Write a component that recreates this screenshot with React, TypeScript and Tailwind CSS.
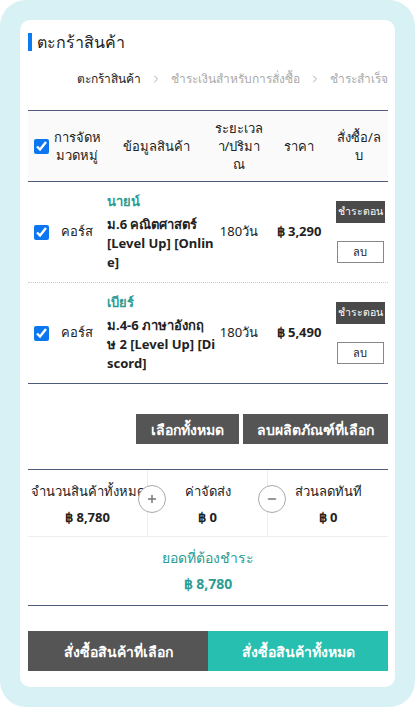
import { Plus, Minus, ChevronRight } from 'lucide-react';

interface CartItem {
    teacher: string;
    lines: string[];
    duration: string;
    price: string;
}

const items: CartItem[] = [
    {
        teacher: 'นายน์',
        lines: ['ม.6 คณิตศาสตร์', '[Level Up] [Onlin', 'e]'],
        duration: '180วัน',
        price: '3,290',
    },
    {
        teacher: 'เบียร์',
        lines: ['ม.4-6 ภาษาอังกฤ', 'ษ 2 [Level Up] [Di', 'scord]'],
        duration: '180วัน',
        price: '5,490',
    },
];

const Check = () => (
    <input
        type="checkbox"
        defaultChecked
        className="w-[15px] h-[15px] m-0 accent-[#0b76ef]"
    />
);

export default function App() {
    return (
        <div className="bg-white min-h-screen font-['Noto_Sans',sans-serif] text-[#222]">
            <div className="bg-[#d8f1f5] rounded-[26px] p-5 h-[707px]">
                <div className="bg-white rounded-[10px] h-full pl-2 pr-[7px] pt-[13px] flex flex-col">
                    {/* title */}
                    <div className="flex items-center gap-[5px] h-[18px]">
                        <div className="w-1 h-[18px] bg-[#0a7cf3]" />
                        <h1 className="text-[16px] leading-none">ตะกร้าสินค้า</h1>
                    </div>

                    {/* steps */}
                    <div className="flex justify-end items-center gap-[9px] whitespace-nowrap overflow-hidden text-[12px] mt-[19px] h-[18px]">
                        <span className="text-[#222]">ตะกร้าสินค้า</span>
                        <ChevronRight className="w-3 h-3 text-[#aaa]" />
                        <span className="text-[#aaa]">ชำระเงินสำหรับการสั่งซื้อ</span>
                        <ChevronRight className="w-3 h-3 text-[#aaa]" />
                        <span className="text-[#aaa]">ชำระสำเร็จ</span>
                    </div>

                    {/* table */}
                    <div className="mt-[22px] border-t border-[#4d5b78] text-[13px]">
                        <div className="flex items-center h-[71px] bg-[#fafafa] border-b border-[#4d5b78] text-center leading-[18px]">
                            <div className="w-[24px] flex justify-center pl-[3px]"><Check /></div>
                            <div className="w-[50px]">การจัดห<br />มวดหมู่</div>
                            <div className="w-[108px]">ข้อมูลสินค้า</div>
                            <div className="w-[58px]">ระยะเวล<br />า/ปริมา<br />ณ</div>
                            <div className="w-[62px]">ราคา</div>
                            <div className="w-[58px] whitespace-nowrap">สั่งซื้อ/ล<br />บ</div>
                        </div>
                        {items.map((it, i) => (
                            <div
                                key={it.teacher}
                                className={
                                    i === 0
                                        ? 'flex items-center h-[101px] border-b border-dotted border-[#ccc]'
                                        : 'flex items-center h-[101px] border-b border-[#4d5b78]'
                                }
                            >
                                <div className="w-[24px] flex justify-center pl-[3px]"><Check /></div>
                                <div className="w-[50px] text-center">คอร์ส</div>
                                <div className="w-[108px] pl-[5px]">
                                    <div className="text-[#2a9d93] font-semibold leading-[18px] mb-[5px]">{it.teacher}</div>
                                    {it.lines.map((l) => (
                                        <div key={l} className="font-bold leading-[19px] whitespace-nowrap">{l}</div>
                                    ))}
                                </div>
                                <div className="w-[58px] text-center">{it.duration}</div>
                                <div className="w-[62px] text-center font-bold">฿ {it.price}</div>
                                <div className="w-[58px] flex flex-col items-center gap-[18px] pl-[2px]">
                                    <button className="bg-[#4a4a4a] text-white text-[10.5px] px-0 h-[22px] w-[49px] whitespace-nowrap">ชำระตอน</button>
                                    <button className="border border-[#888] text-[11px] h-[22px] w-[47px]">ลบ</button>
                                </div>
                            </div>
                        ))}
                    </div>

                    {/* bulk actions */}
                    <div className="flex justify-end gap-1 mt-[30px]">
                        <button className="bg-[#555] text-white text-[14px] font-semibold h-[30px] px-[15px]">เลือกทั้งหมด</button>
                        <button className="bg-[#555] text-white text-[14px] font-semibold h-[30px] px-[14px]">ลบผลิตภัณฑ์ที่เลือก</button>
                    </div>

                    {/* summary */}
                    <div className="mt-[25px] border-t border-[#4d5b78]">
                        <div className="relative grid grid-cols-3 h-[67px] border-b border-[#eee] text-[13px]">
                            <div className="flex flex-col items-center pt-[12px] gap-[6px] border-r border-[#eee] overflow-hidden whitespace-nowrap">
                                <span>จำนวนสินค้าทั้งหมด</span>
                                <span className="font-bold">฿ 8,780</span>
                            </div>
                            <div className="flex flex-col items-center pt-[12px] gap-[6px] border-r border-[#eee]">
                                <span>ค่าจัดส่ง</span>
                                <span className="font-bold">฿ 0</span>
                            </div>
                            <div className="flex flex-col items-center pt-[12px] gap-[6px]">
                                <span>ส่วนลดทันที</span>
                                <span className="font-bold">฿ 0</span>
                            </div>
                            <div className="absolute left-[110px] top-[15px] w-[28px] h-[28px] rounded-full border border-[#aaa] bg-white flex items-center justify-center">
                                <Plus className="w-3 h-3 text-[#777]" strokeWidth={3} />
                            </div>
                            <div className="absolute left-[230px] top-[15px] w-[28px] h-[28px] rounded-full border border-[#aaa] bg-white flex items-center justify-center">
                                <Minus className="w-3 h-3 text-[#777]" strokeWidth={3} />
                            </div>
                        </div>
                        <div className="h-[69px] flex flex-col items-center pt-[10px] gap-[5px] text-[#2a9d93] text-[14px] border-b border-[#4d5b78]">
                            <span>ยอดที่ต้องชำระ</span>
                            <span className="font-bold">฿ 8,780</span>
                        </div>
                    </div>

                    {/* checkout */}
                    <div className="grid grid-cols-2 mt-[25px] h-[40px] text-white text-[14px] font-semibold">
                        <button className="bg-[#555]">สั่งซื้อสินค้าที่เลือก</button>
                        <button className="bg-[#26bfb0]">สั่งซื้อสินค้าทั้งหมด</button>
                    </div>
                </div>
            </div>
        </div>
    );
}
